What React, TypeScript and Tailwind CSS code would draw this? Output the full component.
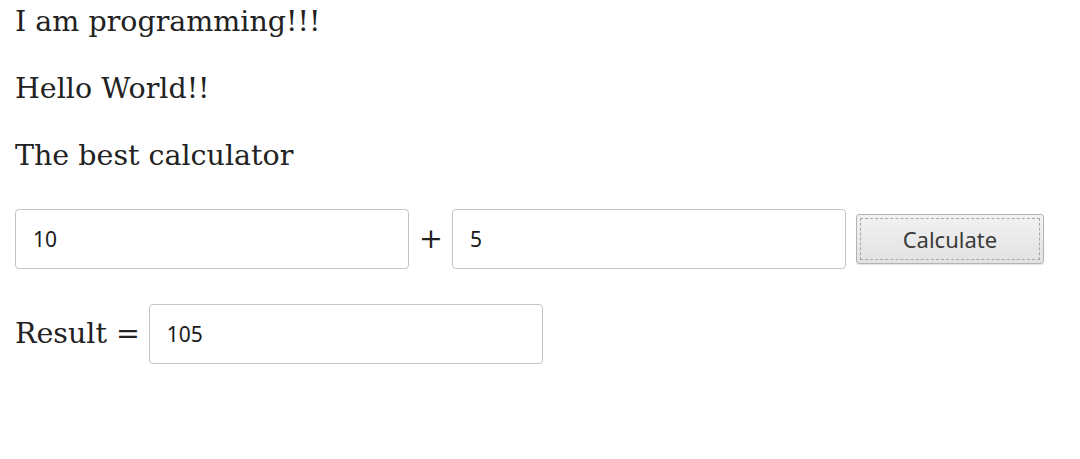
import { useState } from 'react'

export default function App() {
  const [a, setA] = useState('10')
  const [b, setB] = useState('5')
  const [result, setResult] = useState('105')

  const inputClass =
    'h-[60px] w-[394px] rounded-[4px] border border-[#c4c4c4] bg-white pl-[17px] text-[21px] text-[#1a1a1a] outline-none [font-family:"Noto_Sans",sans-serif]'

  return (
    <div className="min-h-screen bg-white pl-[15px] pt-[5px] text-[28.5px] text-[#222] [font-family:'DejaVu_Serif',serif]">
      <p className="leading-[34px]">I am programming!!!</p>
      <p className="mt-[33px] leading-[34px]">Hello World!!</p>
      <p className="mt-[33px] leading-[34px]">The best calculator</p>

      <div className="mt-[36px] flex items-center">
        <input className={inputClass} value={a} onChange={(e) => setA(e.target.value)} />
        <span className="ml-[10px] mr-[9px] leading-[34px]">+</span>
        <input className={inputClass} value={b} onChange={(e) => setB(e.target.value)} />
        <button
          className="ml-[10px] flex h-[50px] w-[188px] items-center justify-center rounded-[3px] border border-[#b4b4b4] bg-gradient-to-b from-[#f2f2f2] to-[#e2e2e2] p-[3px] shadow-[0_1px_1px_rgba(0,0,0,0.12)]"
          onClick={() => setResult(String(a) + String(b))}
        >
          <span className="flex h-full w-full items-center justify-center border border-dashed border-[#a8a8a8] text-[22px] text-[#3a3a3a] [font-family:'Noto_Sans',sans-serif]">
            Calculate
          </span>
        </button>
      </div>

      <div className="mt-[35px] flex items-center">
        <span className="mr-[9px] leading-[34px]">Result =</span>
        <input className={inputClass} value={result} readOnly />
      </div>
    </div>
  )
}
